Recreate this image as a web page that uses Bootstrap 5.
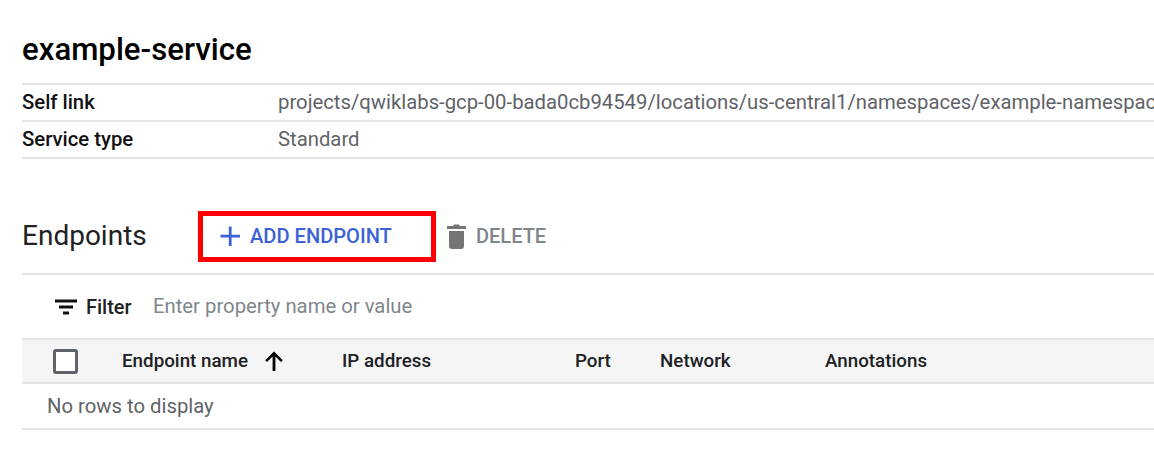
<!DOCTYPE html>
<html lang="en">
  <head>
    <title>example-service</title>
    <meta charset="utf-8" />
    <meta name="viewport" content="width=device-width, initial-scale=1" />
    <link
      href="https://cdn.jsdelivr.net/npm/bootstrap@5.3.2/dist/css/bootstrap.min.css"
      rel="stylesheet"
    />
    <style>
      html, body { height: 464px; overflow: hidden; }
      body { font-family: Roboto, "Liberation Sans", sans-serif; font-size: 20.3px; color: #202124; background: #fff; }
      .page-wrap { padding: 30px 0 0 22px; width: 1154px; overflow: hidden; }
      .svc-title { font-size: 31.2px; font-weight: 500; line-height: 40px; margin: 0 0 13px; color: #000; }
      .info-rows { border-top: 2px solid #e4e4e4; }
      .info-row { height: 37px; border-bottom: 2px solid #e4e4e4; white-space: nowrap; overflow: hidden; }
      .info-key { width: 256px; flex: none; font-weight: 500; color: #111; }
      .info-val { color: #5f6368; }
      .ep-head { margin-top: 40px; height: 76px; border-bottom: 2px solid #e4e4e4; }
      .ep-title { width: 176px; font-size: 28px; flex: none; color: #202124; }
      .add-box { width: 238px; height: 51px; border: 5px solid #f00; padding-left: 15px; color: #3b62d6; font-size: 20.1px; font-weight: 500; flex: none; margin-right: 8px; }
      .add-box span { margin-left: 8px; }
      .del-btn { color: #80868b; font-size: 20px; font-weight: 500; }
      .filter-bar { height: 63px; padding-left: 32px; }
      .filter-label { font-weight: 500; font-size: 20px; margin-left: 8px; width: 67px; color: #202124; }
      .filter-hint { color: #80868b; }
      .grid-head { height: 46px; background: #f5f5f5; border-top: 2px solid #e4e4e4; border-bottom: 2px solid #e4e4e4; font-size: 18.8px; font-weight: 500; color: #202124; white-space: nowrap; }
      .check-box { width: 25px; height: 25px; border: 3px solid #5f6368; border-radius: 3px; margin-left: 31px; flex: none; background: #fff; }
      .col-name { margin-left: 44px; width: 220px; flex: none; }
      .sort-arrow { margin-left: 14px; }
      .col-ip { width: 233px; flex: none; }
      .col-port { width: 85px; flex: none; }
      .col-net { width: 165px; flex: none; }
      .no-rows { height: 46px; padding-left: 25px; border-bottom: 2px solid #e4e4e4; color: #5f6368; }
    </style>
  </head>
  <body>
    <div class="page-wrap">
      <h1 class="svc-title">example-service</h1>
      <div class="info-rows">
        <div class="info-row d-flex align-items-center">
          <div class="info-key">Self link</div>
          <div class="info-val">projects/qwiklabs-gcp-00-bada0cb94549/locations/us-central1/namespaces/example-namespace/services/example-service</div>
        </div>
        <div class="info-row d-flex align-items-center">
          <div class="info-key">Service type</div>
          <div class="info-val">Standard</div>
        </div>
      </div>

      <div class="ep-head d-flex align-items-center">
        <div class="ep-title">Endpoints</div>
        <div class="add-box d-flex align-items-center">
          <svg width="24" height="24" viewBox="0 0 24 24" fill="#3b62d6"><path d="M10.800 2.500h2.800v8.300H22v2.800h-8.400V22h-2.800v-8.400H2.500v-2.800h8.300z"/></svg>
          <span>ADD ENDPOINT</span>
        </div>
        <div class="del-btn d-flex align-items-center gap-2">
          <svg width="24" height="28" viewBox="0 0 24 28" fill="#757575"><path d="M5 9h15v15a3 3 0 0 1-3 3H8a3 3 0 0 1-3-3zM3 4h6l1-1.500h5L16 4h6v3H3z"/></svg>
          <span>DELETE</span>
        </div>
      </div>

      <div class="filter-bar d-flex align-items-center">
        <svg width="24" height="24" viewBox="0 0 24 24" fill="#111"><path d="M1 4.500h22v3H1zM5 10.500h14v3H5zM9 16.500h6v3H9z"/></svg>
        <div class="filter-label">Filter</div>
        <div class="filter-hint">Enter property name or value</div>
      </div>

      <div class="grid-head d-flex align-items-center">
        <div class="check-box"></div>
        <div class="col-name d-flex align-items-center">Endpoint name
          <svg class="sort-arrow" width="24" height="24" viewBox="0 0 24 24" fill="#000"><path d="M10.600 22V7.500L5 13l-1.800-1.800L12 2.500l8.800 8.700L19 13l-5.600-5.500V22z"/></svg>
        </div>
        <div class="col-ip">IP address</div>
        <div class="col-port">Port</div>
        <div class="col-net">Network</div>
        <div>Annotations</div>
      </div>
      <div class="no-rows d-flex align-items-center">No rows to display</div>
    </div>
    <script src="https://cdn.jsdelivr.net/npm/bootstrap@5.3.2/dist/js/bootstrap.bundle.min.js"></script>
  </body>
</html>
